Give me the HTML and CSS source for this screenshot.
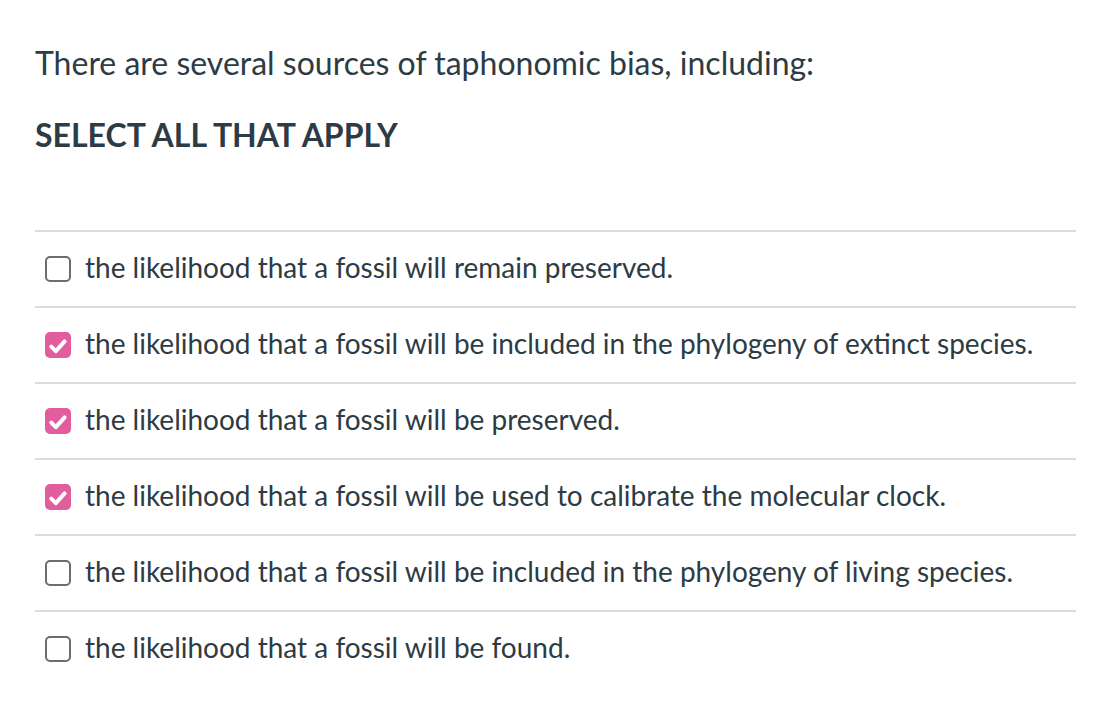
FILE: index.html
```html
<!DOCTYPE html>
<html>
<head>
<meta charset="utf-8">
<link rel="stylesheet" href="styles.css">
</head>
<body>
<div class="question">
  <p class="prompt">There are several sources of taphonomic bias, including:</p>
  <p class="instr">SELECT ALL THAT APPLY</p>
  <div class="answers">
    <label class="opt"><span class="box"></span><span class="txt">the likelihood that a fossil will remain preserved.</span></label>
    <label class="opt"><span class="box checked"><svg viewBox="0 0 26 26"><path d="M6.3 14.6 L10.8 19.2 L19.6 9.4" fill="none" stroke="#fff" stroke-width="4" stroke-linecap="round" stroke-linejoin="round"/></svg></span><span class="txt">the likelihood that a fossil will be included in the phylogeny of extinct species.</span></label>
    <label class="opt"><span class="box checked"><svg viewBox="0 0 26 26"><path d="M6.3 14.6 L10.8 19.2 L19.6 9.4" fill="none" stroke="#fff" stroke-width="4" stroke-linecap="round" stroke-linejoin="round"/></svg></span><span class="txt">the likelihood that a fossil will be preserved.</span></label>
    <label class="opt"><span class="box checked"><svg viewBox="0 0 26 26"><path d="M6.3 14.6 L10.8 19.2 L19.6 9.4" fill="none" stroke="#fff" stroke-width="4" stroke-linecap="round" stroke-linejoin="round"/></svg></span><span class="txt">the likelihood that a fossil will be used to calibrate the molecular clock.</span></label>
    <label class="opt"><span class="box"></span><span class="txt">the likelihood that a fossil will be included in the phylogeny of living species.</span></label>
    <label class="opt"><span class="box"></span><span class="txt">the likelihood that a fossil will be found.</span></label>
  </div>
</div>
</body>
</html>
```
FILE: styles.css
```css
html, body {
  margin: 0;
  padding: 0;
  background: #fff;
}
body {
  font-family: Lato, "Noto Sans", sans-serif;
  color: #2d3b45;
}
.question {
  padding: 0 22px 0 35px;
}
.prompt {
  margin: 0;
  padding-top: 44px;
  font-size: 32px;
  line-height: 38px;
}
.instr {
  margin: 34px 0 0 0;
  font-size: 32px;
  font-weight: 700;
  line-height: 38px;
}
.answers {
  margin-top: 76px;
}
.opt {
  display: flex;
  align-items: center;
  height: 74px;
  border-top: 2px solid #dcdcdc;
}
.box {
  box-sizing: border-box;
  width: 26px;
  height: 26px;
  margin-left: 10px;
  margin-right: 14px;
  border: 2.5px solid #6d6d6d;
  border-radius: 5px;
  flex: none;
  display: flex;
}
.box.checked {
  border: none;
  background: #e25d9d;
}
.box svg {
  width: 26px;
  height: 26px;
}
.txt {
  font-size: 28px;
  line-height: 34px;
  margin-bottom: 4px;
}
```
